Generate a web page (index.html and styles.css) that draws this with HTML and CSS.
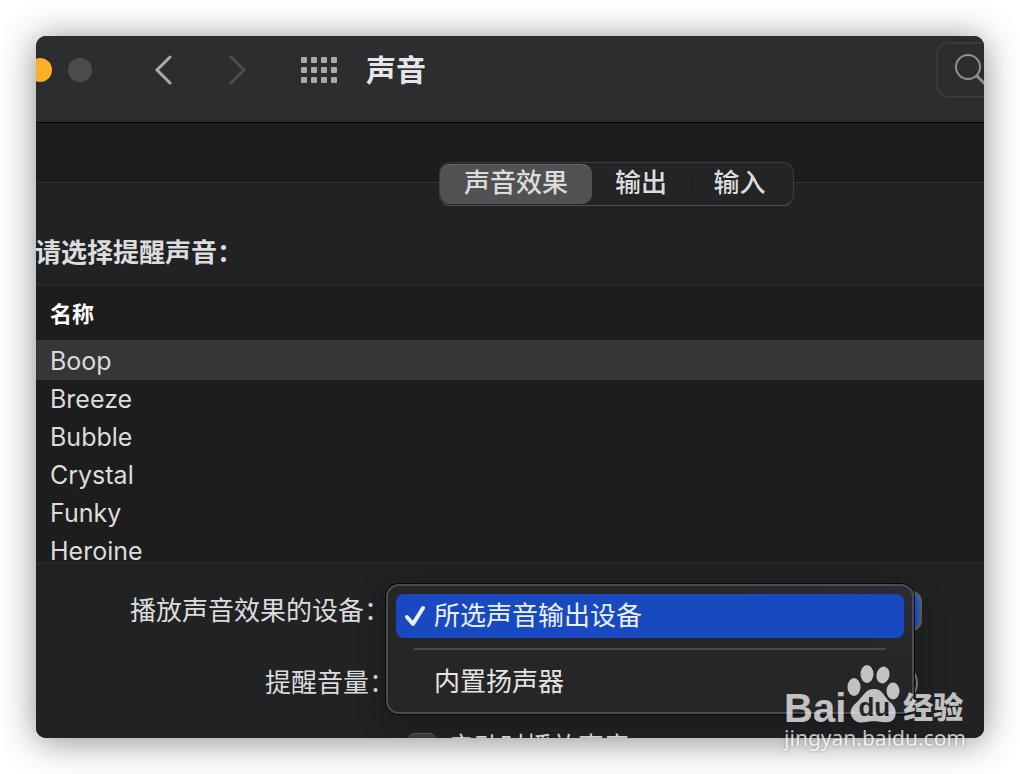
FILE: index.html
```html
<!DOCTYPE html>
<html lang="zh-CN">
<head>
<meta charset="utf-8">
<title>声音</title>
<link rel="stylesheet" href="styles.css">
</head>
<body>
<div class="window">
  <header class="toolbar">
    <div class="lights"><span class="light light-min"></span><span class="light"></span></div>
    <button class="icon-btn back" aria-label="后退"><svg width="18" height="30" viewBox="0 0 18 30"><path d="M16 2 3 15l13 13"/></svg></button>
    <button class="icon-btn forward" aria-label="前进" disabled><svg width="18" height="30" viewBox="0 0 18 30"><path d="M2 2l13 13L2 28"/></svg></button>
    <button class="icon-btn grid-btn" aria-label="显示全部"><svg width="36" height="26" viewBox="0 0 36 26"><g id="r"><rect x="0" y="0" width="6" height="6" rx="1"/><rect x="10" y="0" width="6" height="6" rx="1"/><rect x="20" y="0" width="6" height="6" rx="1"/><rect x="30" y="0" width="6" height="6" rx="1"/></g><use href="#r" y="10"/><use href="#r" y="20"/></svg></button>
    <h1 class="title">声音</h1>
    <label class="search"><svg width="34" height="34" viewBox="0 0 34 34"><circle cx="14" cy="14" r="12"/><path class="handle" d="M22.500 22.500 32 32"/></svg><input type="search" aria-label="搜索"></label>
  </header>
  <main class="content">
    <section class="panel">
      <div class="tabs" role="tablist">
        <button class="tab tab-on" role="tab" aria-selected="true">声音效果</button>
        <button class="tab" role="tab">输出</button>
        <button class="tab tab-last" role="tab">输入</button>
      </div>
      <h2 class="prompt">请选择提醒声音：</h2>
      <div class="list">
        <table class="sounds">
          <thead><tr><th>名称</th></tr></thead>
          <tbody>
            <tr class="selected"><td>Boop</td></tr>
            <tr><td>Breeze</td></tr>
            <tr><td>Bubble</td></tr>
            <tr><td>Crystal</td></tr>
            <tr><td>Funky</td></tr>
            <tr><td>Heroine</td></tr>
          </tbody>
        </table>
      </div>
      <form class="settings">
        <div class="row">
          <label class="label label-device" for="device">播放声音效果的设备：</label>
          <div class="control">
            <select class="device" id="device"></select>
            <div class="menu" role="menu">
              <button type="button" class="item item-on" role="menuitem"><svg width="20" height="22" viewBox="0 0 20 22"><path d="M2 12l6 7L18 3"/></svg>所选声音输出设备</button>
              <hr class="rule">
              <button type="button" class="item" role="menuitem">内置扬声器</button>
            </div>
          </div>
        </div>
        <div class="row">
          <span class="label">提醒音量：</span>
          <div class="control volume"><svg width="10" height="30" viewBox="0 0 10 30"><path d="M3 1q10 14 0 28"/></svg></div>
        </div>
        <div class="row row-check">
          <input class="check" type="checkbox" id="startup"><label for="startup">启动时播放声音</label>
        </div>
      </form>
    </section>
  </main>
</div>
<div class="watermark">
  <div class="brand">
    <span class="bai">Bai</span>
    <span class="paw"><svg width="54" height="58" viewBox="0 0 54 58"><ellipse cx="7" cy="22" rx="6.500" ry="9"/><ellipse cx="20" cy="9" rx="6.500" ry="9"/><ellipse cx="36" cy="10" rx="6.500" ry="8.500" transform="rotate(12 36 10)"/><ellipse cx="46" cy="26" rx="6.500" ry="8.500"/><path d="M27 24c-9 0-11 8-17 13-6 5-8 10-5 15 3 6 9 6 14 5 6-1 10-1 16 0 5 1 11 0 13-5 2-6 0-10-5-15-6-5-7-13-16-13z"/></svg><span class="du">du</span></span>
    <span class="jingyan">经验</span>
  </div>
  <div class="url">jingyan.baidu.com</div>
</div>
</body>
</html>
```

FILE: styles.css
```css
* { box-sizing: border-box; }

body {
  margin: 0;
  padding: 36px;
  height: 100vh;
  overflow: hidden;
  position: relative;
  background: #fff;
  color: #dcdcdc;
  font: 26px/40px Inter, "Noto Sans CJK SC", sans-serif;
}

button, input, select { font: inherit; color: inherit; margin: 0; }
button { border: 0; padding: 0; background: none; }
svg { display: block; fill: none; flex: none; }

.window {
  height: 100%;
  display: flex;
  flex-direction: column;
  overflow: hidden;
  border-radius: 10px;
  background: #1d1d1d;
  box-shadow: 0 3px 36px rgba(0, 0, 0, .46);
}

/* Toolbar */
.toolbar {
  flex: none;
  display: flex;
  align-items: center;
  height: 87px;
  padding-bottom: 18px;
  background: #2c2d2f;
  border-bottom: 1px solid #000;
}
.lights { display: flex; gap: 16px; margin-left: -8px; }
.light { width: 24px; height: 24px; border-radius: 50%; background: #4b4c4e; }
.light-min { background: #fdb027; }
.icon-btn svg { stroke: #a9aaac; stroke-width: 3; stroke-linecap: round; }
.back { margin-left: 62px; }
.forward { margin-left: 57px; }
.forward svg { stroke: #4b4c4e; }
.grid-btn { margin-left: 54px; }
.grid-btn svg { fill: #a9aaac; stroke: none; }
.title { margin: 0 0 0 29px; font-size: 30px; font-weight: 700; color: #e6e6e6; }
.search {
  flex: 0 0 240px;
  min-width: 0;
  display: flex;
  align-items: center;
  height: 56px;
  margin-left: auto;
  margin-right: -192px;
  padding-left: 16px;
  border: 2px solid #38393b;
  border-radius: 12px;
}
.search svg { stroke: #8f9091; stroke-width: 2; }
.search .handle { stroke-width: 3; }
.search input { min-width: 0; flex: 1; border: 0; background: none; }

/* Panel */
.content { flex: 1; min-height: 0; padding-top: 59px; }
.panel { background: #212224; border-top: 1px solid #303234; }
.tabs {
  display: flex;
  width: max-content;
  height: 44px;
  margin: -21px 0 0 403px;
  padding: 1px 0;
  background: #232426;
  border: 1px solid #3a3b3c;
  border-bottom-color: #505152;
  border-radius: 11px;
}
.tab { position: relative; width: 98px; line-height: 38px; padding-bottom: 2px; font-weight: 500; }
.tab-on {
  width: 152px;
  border-radius: 10px;
  background: #505153;
  box-shadow: inset 0 1px #68696a;
}
.tab-last { width: 103px; padding-right: 4px; }
.tab-last::before {
  content: "";
  position: absolute;
  left: 0;
  top: 8px;
  height: 24px;
  border-left: 2px solid #1e1f20;
}
.prompt { margin: 27px 0 11px -1px; font-size: 26px; line-height: 40px; font-weight: 700; }

.list {
  height: 280px;
  overflow: hidden;
  background: #1d1d1d;
  border-top: 2px solid #28292a;
  border-bottom: 2px solid #28292a;
}
.sounds { width: 100%; border-collapse: collapse; }
.sounds th {
  height: 54px;
  padding: 2px 14px 0;
  text-align: left;
  font-size: 22px;
  line-height: 38px;
  font-weight: 700;
  color: #fff;
}
.sounds td { height: 38px; padding: 0 14px; font-size: 25px; line-height: 38px; }
.sounds .selected td { padding-top: 2px; background: #363636; }

/* Settings form */
.settings { padding-top: 25px; }
.row { display: flex; align-items: center; height: 44px; margin-bottom: 28px; }
.label { flex: 0 0 359px; text-align: right; white-space: nowrap; }
.label-device { padding-right: 5px; }
.control { position: relative; flex: 1; margin-right: 62px; }
.device {
  display: block;
  width: 100%;
  height: 40px;
  appearance: none;
  border: 3px solid #5f6163;
  border-radius: 10px;
  background: #1d58e0;
}
.menu {
  position: absolute;
  z-index: 1;
  top: -7px;
  left: -9px;
  right: 8px;
  padding: 8px;
  background: linear-gradient(20deg, #262626 70%, #2b2d35);
  border: 2px solid #4b4c4e;
  border-radius: 13px;
  box-shadow: 0 0 0 1px #080808, 0 8px 30px rgba(0, 0, 0, .3);
}
.item {
  display: flex;
  align-items: center;
  width: 100%;
  height: 44px;
  padding-left: 38px;
  border-radius: 8px;
  color: #e4e4e4;
}
.item-on { padding-left: 9px; gap: 9px; background: #1849c1; color: #eaf0ff; }
.item svg { stroke: #eaf0ff; stroke-width: 4; stroke-linecap: round; stroke-linejoin: round; }
.rule { margin: 10px 18px; border: 0; border-top: 2px solid #48494a; }
.volume svg { margin-left: auto; margin-right: 3px; stroke: #808183; stroke-width: 2; }
.row-check { margin: -8px 0 -31px; padding-left: 372px; gap: 12px; }
.check {
  appearance: none;
  width: 28px;
  height: 28px;
  border-radius: 7px;
  background: #3d3e40;
  box-shadow: inset 0 1px #5c5d5f;
}

/* Watermark */
.watermark {
  position: absolute;
  right: 54px;
  bottom: 21px;
  z-index: 2;
  opacity: .72;
  color: #fff;
  white-space: nowrap;
}
.brand { display: flex; align-items: flex-end; height: 58px; }
.bai { font: 700 40px/30px "Liberation Sans", sans-serif; }
.paw { position: relative; margin-left: 1px; }
.paw svg { fill: #fff; }
.du {
  position: absolute;
  left: 0;
  right: 0;
  bottom: 4px;
  text-align: center;
  font: 700 26px/24px "Liberation Sans", sans-serif;
  color: #222;
}
.jingyan { margin-left: 2px; font: 900 30px/36px "Noto Sans CJK SC", sans-serif; }
.url { font: 21px/30px "Noto Sans", sans-serif; text-shadow: 0 0 3px rgba(0, 0, 0, .5); }
```
